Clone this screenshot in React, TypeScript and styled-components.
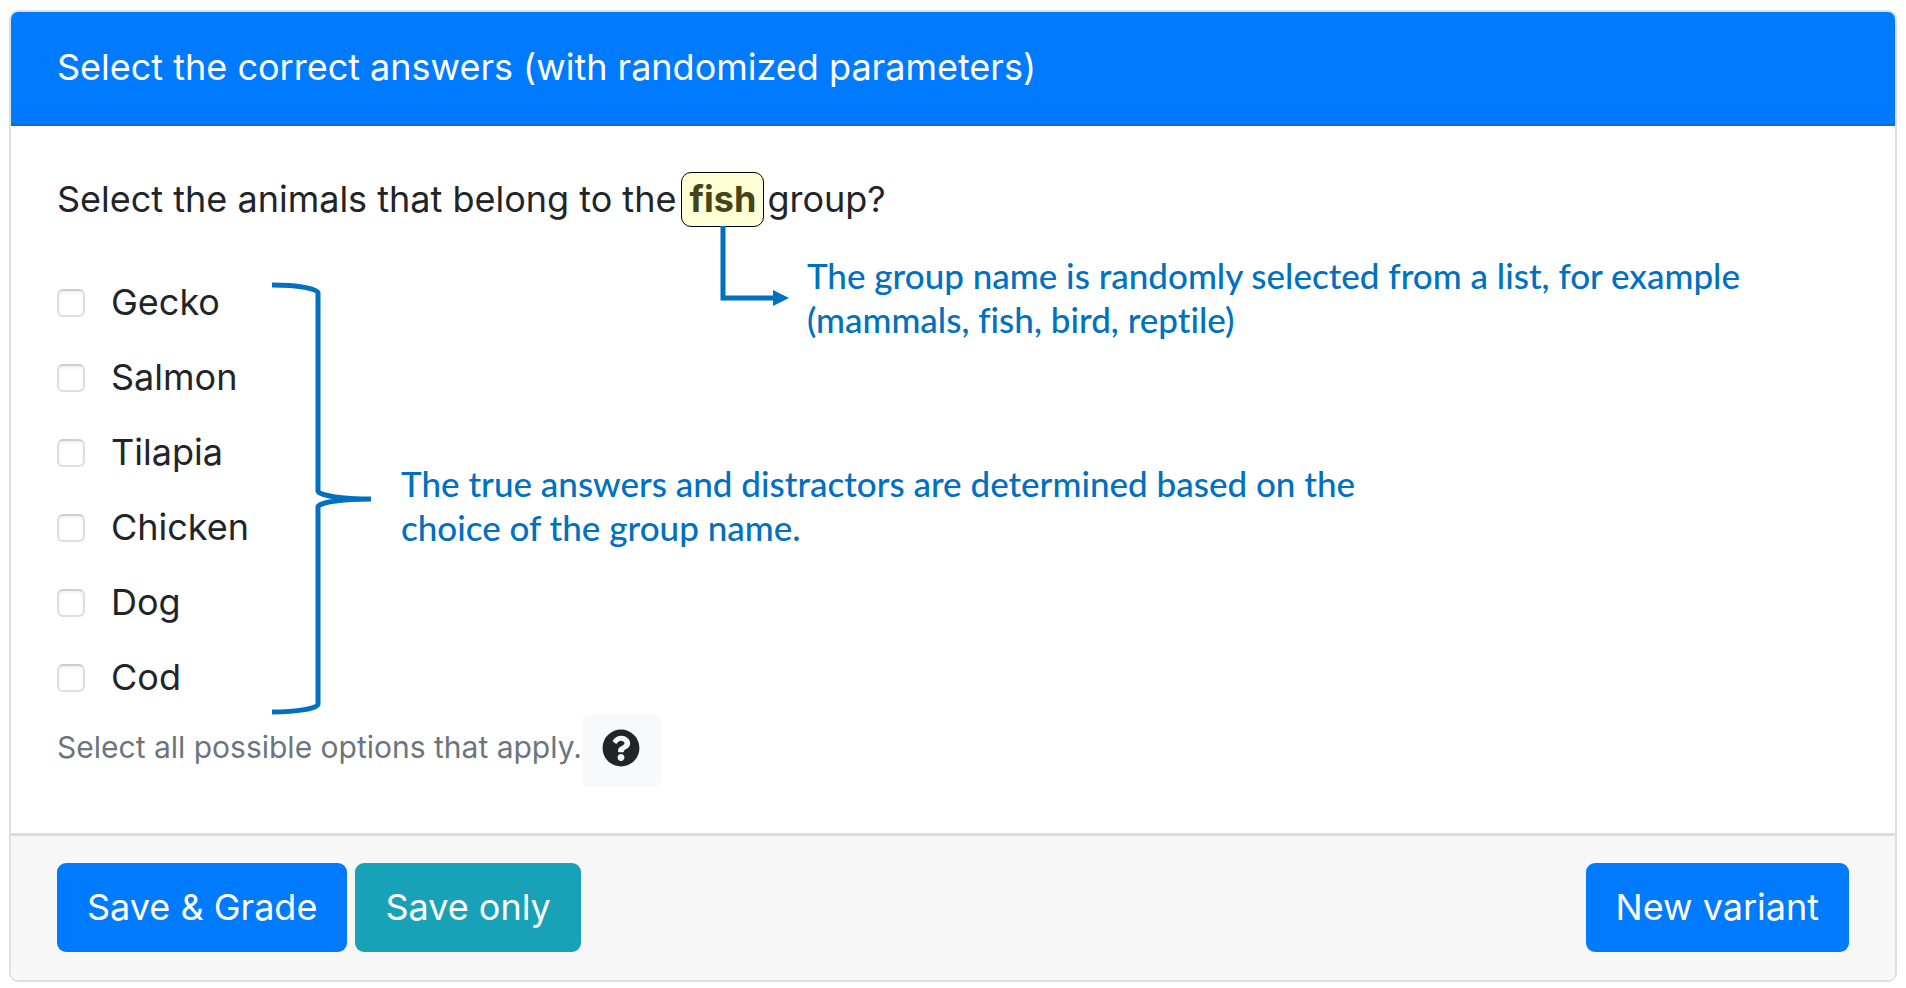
import React from "react";
import styled, { createGlobalStyle } from "styled-components";

const GlobalStyle = createGlobalStyle`
  *, *::before, *::after { box-sizing: border-box; }
  body {
    margin: 0;
    background: #fff;
    color: #212529;
    font-family: Inter, "Liberation Sans", sans-serif;
    font-size: 36px;
    line-height: 55px;
  }
`;

const Page = styled.main`
  padding: 10px 9px 7px;
`;

const Card = styled.form`
  border: 2px solid #dfdfdf;
  border-radius: 9px;
  background: #fff;
`;

const CardHeader = styled.header`
  padding: 28px 46px;
  border-bottom: 3px solid #006fe6;
  border-radius: 7px 7px 0 0;
  background: #007bff;
  color: #fff;
`;

const Title = styled.h1`
  margin: 0;
  font: inherit;
`;

const CardBody = styled.div`
  padding: 46px;
`;

const Question = styled.p`
  margin: 0 0 38px;
`;

const GroupName = styled.strong`
  position: relative;
  display: inline-block;
  margin: 0 3px 0 5px;
  padding: 0 7px;
  border: 1px solid #000;
  border-radius: 10px;
  background: #ffffd5;
  color: #434518;
  font-weight: 700;
  line-height: 53px;
`;

const Callout = styled.span`
  position: absolute;
  top: 100%;
  left: 50%;
  display: flex;
  align-items: flex-start;
  gap: 17px;
  margin-left: -3px;
`;

const Note = styled.span`
  color: #0070c0;
  font-family: Lato, "Liberation Sans", sans-serif;
  font-size: 35px;
  font-weight: 500;
  font-variant-ligatures: none;
  line-height: 44px;
  white-space: nowrap;
`;

const CalloutNote = styled(Note)`
  padding-top: 27px;
`;

const Drawing = styled.svg`
  display: block;
  flex: none;
  fill: none;
  stroke: #0070c0;
  stroke-width: 5px;
`;

const Answers = styled.div`
  display: flex;
  align-items: center;
`;

const BraceDrawing = styled(Drawing)`
  margin-top: 17px;
`;

const ChoiceList = styled.ul`
  width: 215px;
  margin: 0;
  padding: 0;
  list-style: none;
`;

const Choice = styled.li`
  display: flex;
  align-items: center;
  height: 75px;
`;

const ChoiceLabel = styled.label`
  display: flex;
  align-items: center;
  gap: 26px;
`;

const Checkbox = styled.input`
  appearance: none;
  width: 28px;
  height: 28px;
  margin: 0;
  border: 2px solid #dedede;
  border-top-color: #cdcdcd;
  border-radius: 6px;
  background: #fff;
  box-shadow: inset 0 2px 3px #f0f0f0;

  &:checked {
    background: #007bff;
  }
`;

const AnswersNote = styled(Note)`
  margin: 30px 0 0 30px;
`;

const Hint = styled.div`
  display: flex;
  align-items: flex-start;
  color: #6c757d;
  font-size: 30px;
  line-height: 64px;
`;

const HelpButton = styled.button`
  display: flex;
  align-items: center;
  justify-content: center;
  width: 79px;
  height: 72px;
  padding: 0 0 6px;
  border: 0;
  border-radius: 7px;
  background: #f8f9fa;
  color: #212529;
`;

const CardFooter = styled.footer`
  display: flex;
  align-items: center;
  gap: 8px;
  padding: 27px 46px 28px;
  border-top: 3px solid #dcdcdc;
  border-radius: 0 0 7px 7px;
  background: #f7f7f7;
`;

const Button = styled.button<{ $color: string; $end?: boolean }>`
  height: 89px;
  margin-left: ${({ $end }) => ($end ? "auto" : "0")};
  padding: 0 30px;
  border: 0;
  border-radius: 9px;
  background: ${({ $color }) => $color};
  color: #fff;
  font: inherit;
`;

const choices = ["Gecko", "Salmon", "Tilapia", "Chicken", "Dog", "Cod"];

function ElbowArrow() {
  return (
    <Drawing width="70" height="82" viewBox="0 0 70 82" aria-hidden="true">
      <path d="M3 0V72H54" />
      <path d="M53 64L69 72L53 80Z" fill="#0070c0" stroke="none" />
    </Drawing>
  );
}

function Brace() {
  return (
    <BraceDrawing width="99" height="433" viewBox="0 0 99 433" aria-hidden="true">
      <path d="M0 3A46 8 0 0 1 46 11V209A53 8 0 0 0 99 217A53 8 0 0 0 46 225V422A46 8 0 0 1 0 430" />
    </BraceDrawing>
  );
}

export default function App() {
  return (
    <>
      <GlobalStyle />
      <Page>
        <Card onSubmit={(event: React.FormEvent) => event.preventDefault()}>
          <CardHeader>
            <Title>Select the correct answers (with randomized parameters)</Title>
          </CardHeader>
          <CardBody>
            <Question>
              Select the animals that belong to the
              <GroupName>
                fish
                <Callout>
                  <ElbowArrow />
                  <CalloutNote>
                    The group name is randomly selected from a list, for example
                    <br />
                    (mammals, fish, bird, reptile)
                  </CalloutNote>
                </Callout>
              </GroupName>
              group?
            </Question>
            <Answers>
              <ChoiceList>
                {choices.map((choice) => (
                  <Choice key={choice}>
                    <ChoiceLabel>
                      <Checkbox type="checkbox" name="animal" value={choice} />
                      {choice}
                    </ChoiceLabel>
                  </Choice>
                ))}
              </ChoiceList>
              <Brace />
              <AnswersNote>
                The true answers and distractors are determined based on the
                <br />
                choice of the group name.
              </AnswersNote>
            </Answers>
            <Hint>
              Select all possible options that apply.
              <HelpButton type="button" aria-label="Help">
                <svg width="38" height="38" viewBox="0 0 512 512" fill="currentColor" aria-hidden="true">
                  <path d="M504 256c0 136.997-111.043 248-248 248S8 392.997 8 256C8 119.083 119.043 8 256 8s248 111.083 248 248zM262.655 90c-54.497 0-89.255 22.957-116.549 63.758-3.536 5.286-2.353 12.415 2.715 16.258l34.699 26.31c5.205 3.947 12.621 3.008 16.665-2.122 17.864-22.658 30.113-35.797 57.303-35.797 20.429 0 45.698 13.148 45.698 32.958 0 14.976-12.363 22.667-32.534 33.976C247.128 238.528 216 254.941 216 296v4c0 6.627 5.373 12 12 12h56c6.627 0 12-5.373 12-12v-1.333c0-28.462 83.186-29.647 83.186-106.667 0-58.002-60.165-102-116.531-102zM256 338c-25.365 0-46 20.635-46 46 0 25.364 20.635 46 46 46s46-20.636 46-46c0-25.365-20.635-46-46-46z" />
                </svg>
              </HelpButton>
            </Hint>
          </CardBody>
          <CardFooter>
            <Button type="submit" $color="#007bff">Save &amp; Grade</Button>
            <Button type="submit" $color="#17a2b8">Save only</Button>
            <Button type="button" $color="#007bff" $end>New variant</Button>
          </CardFooter>
        </Card>
      </Page>
    </>
  );
}
